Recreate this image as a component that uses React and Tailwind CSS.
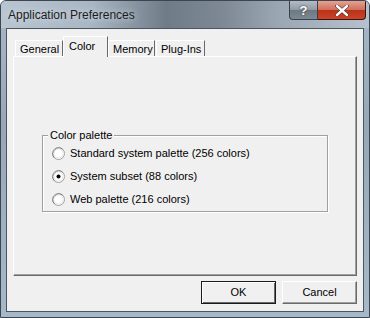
const font = { fontFamily: '"Liberation Sans", Arial, sans-serif' };

const Radio = ({ checked }) => (
  <svg width="13" height="13" viewBox="0 0 13 13" className="shrink-0">
    <circle cx="6.5" cy="6.5" r="6" fill="#ffffff" stroke="#a0a0a0" />
    <path d="M2.3 10.7 A6 6 0 0 1 10.7 2.3" fill="none" stroke="#7a7a7a" strokeWidth="1" />
    <circle cx="6.5" cy="6.5" r="4.6" fill="#ffffff" stroke="#e3e3e3" />
    {checked && <circle cx="6.5" cy="6.5" r="2" fill="#000000" />}
  </svg>
);

const Tab = ({ label, active, width }) => (
  <div
    className={
      active
        ? 'relative z-10 h-[21px] pl-[5px] pt-[3px] bg-[#f0f0f0] border-t border-l border-white border-r border-r-[#696969] flex items-start'
        : 'h-[16px] mt-[4px] pl-[4px] pt-[2px] bg-[#f0f0f0] border-t border-l border-white border-r border-r-[#696969] flex items-start'
    }
    style={{ width }}
  >
    <span className="text-[11px] leading-[13px] text-black whitespace-nowrap">{label}</span>
  </div>
);

export default function App() {
  return (
    <div
      className="w-[370px] h-[318px] overflow-hidden flex flex-col border border-[#3c4652] rounded-t-[6px] bg-[linear-gradient(180deg,#a9b8c6_0%,#97a7b6_40%,#a7b9c9_100%)]"
      style={font}
    >
      {/* Title bar */}
      <div className="h-[27px] flex items-start relative bg-[linear-gradient(90deg,#b9c6d2_0%,#a8b5c2_25%,#6f7c88_45%,#7d8894_60%,#9aa6b2_75%,#b5c1cd_100%)]">
        <span
          className="absolute left-[7px] top-[5px] text-[12px] text-[#1c1c1c]"
          style={{ textShadow: '0 0 6px #dfe8f0' }}
        >
          Application Preferences
        </span>
        <div className="ml-auto mr-[3px] flex">
          <div className="w-[29px] h-[19px] rounded-bl-[4px] border border-[#39424c] border-t-0 bg-[linear-gradient(180deg,#b3bcc5_0%,#8f9aa5_50%,#6d7883_51%,#7c8893_100%)] flex items-center justify-center">
            <span className="text-white text-[13px] font-bold leading-none" style={{ textShadow: '0 0 2px #222' }}>?</span>
          </div>
          <div className="w-[48px] h-[19px] rounded-br-[4px] border border-[#3a1510] border-t-0 border-l-0 bg-[linear-gradient(180deg,#e5a292_0%,#d0705c_48%,#bb3219_52%,#c9442a_100%)] flex items-center justify-center">
            <svg width="14" height="11" viewBox="0 0 14 11">
              <path d="M2 1 L12 10 M12 1 L2 10" stroke="#3a2a28" strokeWidth="3.6" strokeLinecap="round" />
              <path d="M2 1 L12 10 M12 1 L2 10" stroke="#ffffff" strokeWidth="2.4" strokeLinecap="round" />
            </svg>
          </div>
        </div>
      </div>

      {/* Client area */}
      <div className="mx-[5px] mb-[5px] flex-1 border border-[#4a5560] bg-[#f0f0f0] px-[6px] pt-[7px] flex flex-col">
        {/* Tabs */}
        <div className="flex items-start pl-[2px] h-[20px]">
          <Tab label="General" width={48} />
          <Tab label="Color" active width={45} />
          <Tab label="Memory" width={47} />
          <div className="w-[1px]" />
          <Tab label="Plug-Ins" width={49} />
        </div>

        {/* Panel */}
        <div className="h-[220px] border-t border-l border-white border-r border-b border-r-[#696969] border-b-[#696969] shadow-[inset_-1px_-1px_0_#a0a0a0] pt-[78px] pl-[28px]">
          <div className="relative w-[286px] h-[77px] border border-[#a0a0a0] shadow-[1px_1px_0_#ffffff,inset_1px_1px_0_#ffffff]">
            <span className="absolute left-[5px] -top-[8px] px-[2px] bg-[#f0f0f0] text-[11px] leading-[14px] text-black">
              Color palette
            </span>
            <div className="flex flex-col pt-[10px] pl-[9px] gap-[9px]">
              <label className="flex items-center gap-[5px] h-[14px] text-[11px] text-black">
                <Radio />
                Standard system palette (256 colors)
              </label>
              <label className="flex items-center gap-[5px] h-[14px] text-[11px] text-black">
                <Radio checked />
                System subset (88 colors)
              </label>
              <label className="flex items-center gap-[5px] h-[14px] text-[11px] text-black">
                <Radio />
                Web palette (216 colors)
              </label>
            </div>
          </div>
        </div>

        {/* Buttons */}
        <div className="flex justify-end gap-[6px] mt-[5px]">
          <button className="w-[75px] h-[23px] border border-[#1a1a1a] bg-[#f0f0f0] shadow-[inset_1px_1px_0_#ffffff,inset_-1px_-1px_0_#696969] text-[11px] text-black">
            OK
          </button>
          <button className="w-[75px] h-[23px] border border-t-white border-l-white border-r-[#696969] border-b-[#696969] bg-[#f0f0f0] shadow-[inset_-1px_-1px_0_#a0a0a0] text-[11px] text-black">
            Cancel
          </button>
        </div>
      </div>
    </div>
  );
}
